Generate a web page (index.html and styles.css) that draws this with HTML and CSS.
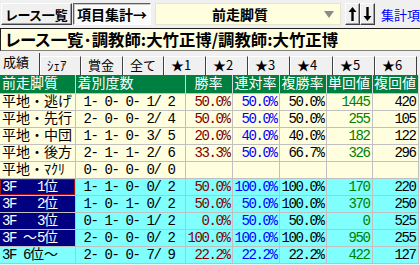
FILE: index.html
```html
<!DOCTYPE html>
<html lang="ja">
<head>
<meta charset="utf-8">
<title>集計</title>
<link rel="stylesheet" href="styles.css">
</head>
<body>
<div class="app">
  <div class="toolbar">
    <div class="btn raised w-list">レース一覧</div>
    <div class="btn pressed w-item">項目集計→</div>
    <div class="combo"><span class="combo-text">前走脚質</span><span class="combo-arrow"></span></div>
    <div class="btn raised arrow"><svg width="9" height="16" viewBox="0 0 9 16"><path d="M4.5 1 L8.5 6 L5.7 6 L5.7 15 L3.3 15 L3.3 6 L0.5 6 Z" fill="#000"/></svg></div>
    <div class="btn raised arrow"><svg width="9" height="16" viewBox="0 0 9 16"><path d="M4.5 15 L8.5 10 L5.7 10 L5.7 1 L3.3 1 L3.3 10 L0.5 10 Z" fill="#000"/></svg></div>
    <span class="link">集計項</span>
  </div>
  <div class="titlebox">レース一覧･調教師:大竹正博/調教師:大竹正博</div>
  <div class="tabs">
    <div class="tab active">成績</div>
    <div class="tab">ｼｪｱ</div>
    <div class="tab">賞金</div>
    <div class="tab">全て</div>
    <div class="tab">★1</div>
    <div class="tab">★2</div>
    <div class="tab">★3</div>
    <div class="tab">★4</div>
    <div class="tab">★5</div>
    <div class="tab">★6</div>
  </div>
  <table class="grid">
    <colgroup>
      <col class="c-name"><col class="c-rec"><col class="c-num"><col class="c-num"><col class="c-num"><col class="c-num2"><col class="c-num2">
    </colgroup>
    <thead>
      <tr>
        <th class="h-left">前走脚質</th>
        <th class="h-left">着別度数</th>
        <th>勝率</th>
        <th>連対率</th>
        <th>複勝率</th>
        <th>単回値</th>
        <th>複回値</th>
      </tr>
    </thead>
    <tbody>
      <tr class="yel"><td class="n">平地・逃げ</td><td class="rec">1- 0- 0- 1/ 2</td><td class="p1">50.0%</td><td class="p2">50.0%</td><td class="p3">50.0%</td><td class="t">1445</td><td class="f">420</td></tr>
      <tr class="yel"><td class="n">平地・先行</td><td class="rec">2- 0- 0- 2/ 4</td><td class="p1">50.0%</td><td class="p2">50.0%</td><td class="p3">50.0%</td><td class="t">255</td><td class="f">105</td></tr>
      <tr class="yel"><td class="n">平地・中団</td><td class="rec">1- 1- 0- 3/ 5</td><td class="p1">20.0%</td><td class="p2">40.0%</td><td class="p3">40.0%</td><td class="t">182</td><td class="f">122</td></tr>
      <tr class="yel"><td class="n">平地・後方</td><td class="rec">2- 1- 1- 2/ 6</td><td class="p1">33.3%</td><td class="p2">50.0%</td><td class="p3">66.7%</td><td class="t">326</td><td class="f">296</td></tr>
      <tr class="yel"><td class="n">平地・ﾏｸﾘ</td><td class="rec">0- 0- 0- 0/ 0</td><td class="p1"></td><td class="p2"></td><td class="p3"></td><td class="t"></td><td class="f"></td></tr>
      <tr class="cya"><td class="n sel focus"><span class="a">3F   1</span>位</td><td class="rec">1- 1- 0- 0/ 2</td><td class="p1">50.0%</td><td class="p2">100.0%</td><td class="p3">100.0%</td><td class="t">170</td><td class="f">220</td></tr>
      <tr class="cya"><td class="n sel"><span class="a">3F   2</span>位</td><td class="rec">1- 0- 1- 0/ 2</td><td class="p1">50.0%</td><td class="p2">50.0%</td><td class="p3">100.0%</td><td class="t">370</td><td class="f">250</td></tr>
      <tr class="cya"><td class="n sel"><span class="a">3F   3</span>位</td><td class="rec">0- 1- 0- 1/ 2</td><td class="p1">0.0%</td><td class="p2">50.0%</td><td class="p3">50.0%</td><td class="t">0</td><td class="f">525</td></tr>
      <tr class="cya"><td class="n sel"><span class="a">3F </span>～<span class="a">5</span>位</td><td class="rec">2- 0- 0- 0/ 2</td><td class="p1">100.0%</td><td class="p2">100.0%</td><td class="p3">100.0%</td><td class="t">950</td><td class="f">255</td></tr>
      <tr class="cya"><td class="n"><span class="a">3F 6</span>位～</td><td class="rec">2- 0- 0- 7/ 9</td><td class="p1">22.2%</td><td class="p2">22.2%</td><td class="p3">22.2%</td><td class="t">422</td><td class="f">127</td></tr>
    </tbody>
  </table>
</div>
</body>
</html>
```

FILE: styles.css
```css
html, body {
  margin: 0;
  padding: 0;
}
body {
  background: #f0f0f0;
  font-family: "Noto Sans CJK JP", "Noto Sans", sans-serif;
  color: #000;
  width: 420px;
  height: 265px;
  overflow: hidden;
}
.app {
  display: flex;
  flex-direction: column;
}

/* toolbar */
.toolbar {
  display: flex;
  align-items: center;
  height: 22px;
  padding-top: 3px;
}
.btn {
  box-sizing: border-box;
  height: 22px;
  display: flex;
  align-items: center;
  justify-content: center;
  font-weight: bold;
  font-size: 13px;
  line-height: 1;
  font-feature-settings: "palt" 1;
}
.raised {
  background: #f0f0f0;
  border-top: 1px solid #fff;
  border-left: 1px solid #fff;
  border-right: 1px solid #404040;
  border-bottom: 1px solid #404040;
  box-shadow: inset -1px -1px 0 #a0a0a0;
}
.pressed {
  background: #fbfbfb;
  border-top: 1px solid #606060;
  border-left: 1px solid #606060;
  border-right: 1px solid #fff;
  border-bottom: 1px solid #fff;
  box-shadow: inset 1px 1px 0 #c8c8c8;
}
.w-list {
  margin-left: 1px;
  width: 72px;
}
.w-item {
  margin-left: 1px;
  width: 78px;
  font-size: 14px;
}
.combo {
  box-sizing: border-box;
  margin-left: 4px;
  width: 188px;
  height: 22px;
  background: #ffffe0;
  border: 1px solid #e4e4d0;
  display: flex;
  align-items: center;
}
.combo-text {
  flex: 1;
  text-align: center;
  font-weight: bold;
  font-size: 14px;
  line-height: 1;
}
.combo-arrow {
  width: 0;
  height: 0;
  border-left: 5px solid transparent;
  border-right: 5px solid transparent;
  border-top: 7px solid #8a8a8a;
  margin-right: 6px;
}
.arrow {
  width: 15px;
}
.toolbar .arrow + .arrow {
  margin-left: 0;
}
.toolbar .combo + .arrow {
  margin-left: 4px;
}
.link {
  margin-left: 6px;
  color: #0000ff;
  font-size: 13px;
  line-height: 1;
  white-space: nowrap;
}

/* title box */
.titlebox {
  box-sizing: border-box;
  margin-top: 3px;
  height: 23px;
  background: #ffffe0;
  border-top: 1px solid #202020;
  border-left: 1px solid #202020;
  border-bottom: 1px solid #808080;
  padding-left: 4px;
  font-weight: bold;
  font-size: 16.4px;
  line-height: 21px;
  white-space: nowrap;
  font-feature-settings: "palt" 1;
}

/* tabs */
.tabs {
  display: grid;
  grid-template-columns: 40px 41px 42px 41px 42px 42px 42px 43px 42px 42px;
  height: 22px;
  margin-top: 2px;
  align-items: end;
}
.tab {
  box-sizing: border-box;
  height: 19px;
  padding-left: 6px;
  font-size: 13px;
  line-height: 16px;
  border-top: 1px solid #fff;
  border-left: 1px solid #fff;
  border-right: 1px solid #404040;
  white-space: nowrap;
}
.tab.active {
  height: 22px;
  padding-left: 3px;
  border-left: none;
  border-top: none;
  line-height: 17px;
}

/* grid table */
.grid {
  border-collapse: collapse;
  table-layout: fixed;
  width: 418px;
  font-family: "Liberation Mono", "Noto Sans CJK JP", monospace;
  font-size: 14px;
}
.c-name { width: 75px; }
.c-rec { width: 110px; }
.c-num { width: 47px; }
.c-num2 { width: 46px; }
.grid th {
  height: 18px;
  padding: 0;
  background: #008040;
  color: #fff;
  font-weight: normal;
  line-height: 18px;
  text-align: center;
  border-left: 1px solid #d8d8d8;
  border-right: 1px solid #d8d8d8;
  border-bottom: 1px solid #c0c0c0;
  white-space: nowrap;
  overflow: hidden;
}
.grid th.h-left {
  text-align: left;
  padding-left: 2px;
}
.grid th:first-child {
  border-left: none;
}
.grid td {
  height: 16px;
  padding: 0 2px 0 0;
  line-height: 16px;
  border: 1px solid #c0c0c0;
  white-space: pre;
  overflow: hidden;
  text-align: right;
  letter-spacing: -1.4px;
}
.grid td:first-child {
  border-left: none;
}
.yel td { background: #ffffe0; }
.cya td { background: #80ffff; }
.grid td.n {
  text-align: left;
  padding-left: 2px;
  letter-spacing: 0;
}
.grid td.n .a {
  letter-spacing: -1.4px;
}
.grid td.rec {
  text-align: left;
  padding-left: 8px;
}
.grid td.sel {
  background: #000080;
  color: #fff;
}
.grid td.focus {
  box-shadow: inset 0 0 0 1px #a01010;
}
.p1 { color: #800000; }
.p2 { color: #0000ff; }
.p3 { color: #000; }
.t { color: #008000; }
.f { color: #000; }
```
